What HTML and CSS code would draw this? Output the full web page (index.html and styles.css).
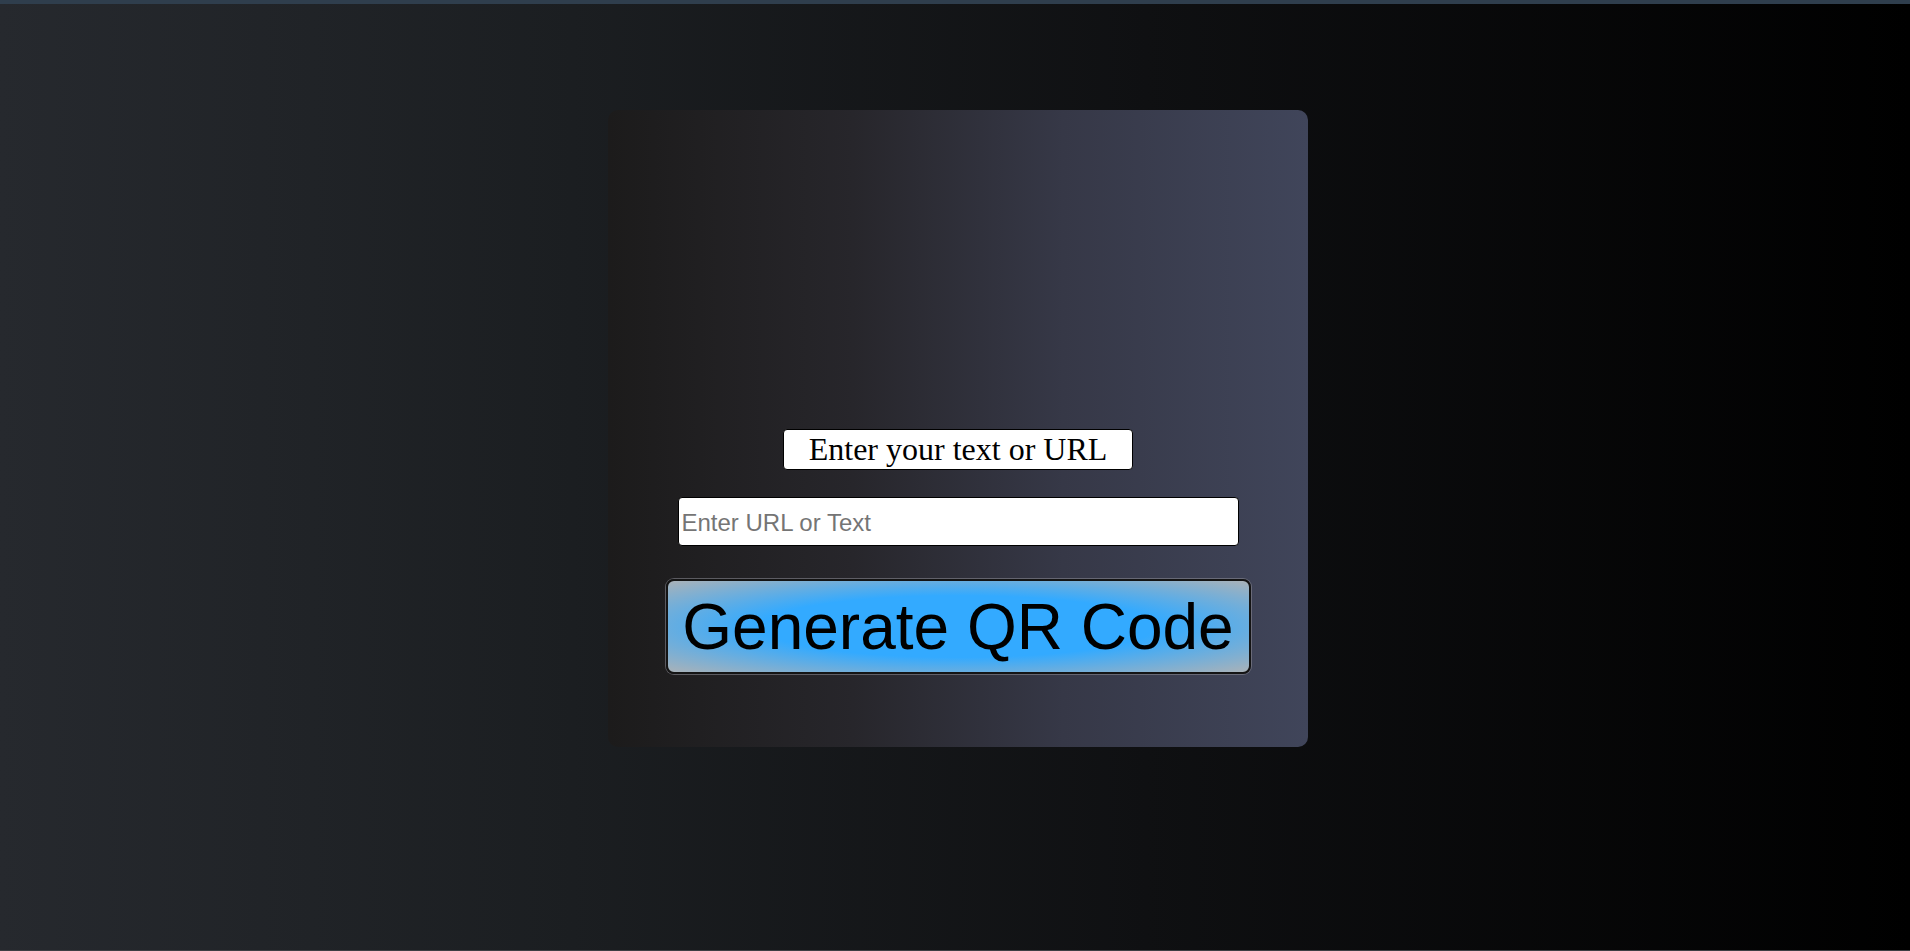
FILE: index.html
```html
<!DOCTYPE html>
<html lang="en">
<head>
<meta charset="utf-8">
<title>QR Code Generator</title>
<link rel="stylesheet" href="styles.css">
</head>
<body>
<main class="page">
  <div class="card">
    <p class="label">Enter your text or URL</p>
    <input class="field" type="text" placeholder="Enter URL or Text">
    <button class="generate" type="button">Generate QR Code</button>
  </div>
</main>
</body>
</html>
```
FILE: styles.css
```css
html, body {
  margin: 0;
  padding: 0;
}
body {
  box-sizing: border-box;
  height: 100vh;
  border-top: 4px solid #2f3e4d;
  border-bottom: 1px solid #3c3f43;
  background: linear-gradient(to right, #26292e 0%, #1b1e21 30%, #0f1012 60%, #000000 100%);
  overflow: hidden;
}
.page {
  display: flex;
  justify-content: center;
  padding-top: 106px;
  padding-left: 6px;
}
.card {
  box-sizing: border-box;
  width: 700px;
  height: 637px;
  border-radius: 10px;
  background: linear-gradient(to right, #1c1b1b 0%, #27262b 35%, #363847 65%, #40455a 100%);
  display: flex;
  flex-direction: column;
  align-items: center;
  padding-top: 319px;
}
.label {
  box-sizing: border-box;
  margin: 0;
  height: 41px;
  padding: 0 25px;
  background: #ffffff;
  border: 1px solid #000000;
  border-radius: 4px;
  font-family: "Liberation Serif", "Times New Roman", serif;
  font-size: 32px;
  line-height: 38px;
  color: #000000;
}
.field {
  box-sizing: border-box;
  margin-top: 27px;
  width: 561px;
  height: 49px;
  padding: 2px 3px 0;
  border: 1px solid #000000;
  border-radius: 4px;
  background: #ffffff;
  font-family: "Liberation Sans", Arial, sans-serif;
  font-size: 24px;
  color: #000000;
  outline: none;
}
.field::placeholder {
  color: #757575;
}
.generate {
  box-sizing: border-box;
  margin-top: 33px;
  width: 585px;
  height: 95px;
  padding: 0;
  border: 2px solid #141414;
  border-radius: 8px;
  box-shadow: 0 0 0 1px rgba(140, 140, 150, 0.55);
  background: radial-gradient(ellipse at center, #33aaff 48%, #aab2b8 100%);
  font-family: "Liberation Sans", Arial, sans-serif;
  font-size: 64px;
  line-height: 88px;
  color: #000000;
  cursor: pointer;
}
```
